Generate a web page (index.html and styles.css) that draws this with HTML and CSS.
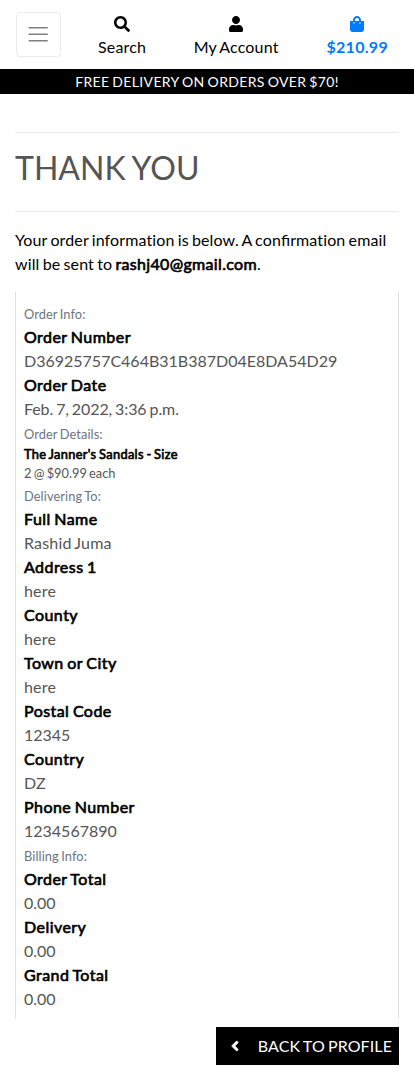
FILE: index.html
```html
<!DOCTYPE html>
<html lang="en">
<head>
<meta charset="utf-8">
<title>Thank You</title>
<link rel="stylesheet" href="styles.css">
</head>
<body>
<header class="header">
  <button class="toggler" aria-label="Menu"><svg width="24.4" height="24.4" viewBox="0 0 30 30"><path d="M4 7h22M4 15h22M4 23h22" stroke="rgba(0,0,0,.5)" stroke-width="2" stroke-linecap="round"/></svg></button>
  <a class="nav-item search"><svg width="16" height="16" viewBox="0 0 512 512"><path d="M505 442.7L405.3 343c-4.500-4.500-10.600-7-17-7H372c27.600-35.300 44-79.700 44-128C416 93.100 322.900 0 208 0S0 93.100 0 208s93.100 208 208 208c48.300 0 92.700-16.400 128-44v16.300c0 6.400 2.500 12.500 7 17l99.700 99.700c9.400 9.400 24.600 9.400 33.900 0l28.300-28.300c9.400-9.400 9.400-24.600.1-34zM208 336c-70.700 0-128-57.200-128-128 0-70.700 57.200-128 128-128 70.700 0 128 57.200 128 128 0 70.700-57.200 128-128 128z"/></svg><span>Search</span></a>
  <a class="nav-item account"><svg width="14" height="16" viewBox="0 0 448 512"><path d="M224 256c70.700 0 128-57.300 128-128S294.700 0 224 0 96 57.300 96 128s57.300 128 128 128zm89.600 32h-16.700c-22.200 10.200-46.900 16-72.900 16s-50.600-5.800-72.900-16h-16.700C60.200 288 0 348.200 0 422.400V464c0 26.500 21.500 48 48 48h352c26.500 0 48-21.500 48-48v-41.600c0-74.200-60.200-134.400-134.400-134.400z"/></svg><span>My Account</span></a>
  <a class="nav-item bag"><svg width="14" height="16" viewBox="0 0 448 512"><path d="M352 160v-32C352 57.420 294.579 0 224 0 153.420 0 96 57.420 96 128v32H0v272c0 44.183 35.817 80 80 80h288c44.183 0 80-35.817 80-80V160h-96zm-192-32c0-35.290 28.710-64 64-64s64 28.710 64 64v32H160v-32zm160 120c-13.255 0-24-10.745-24-24s10.745-24 24-24 24 10.745 24 24-10.745 24-24 24zm-192 0c-13.255 0-24-10.745-24-24s10.745-24 24-24 24 10.745 24 24-10.745 24-24 24z"/></svg><span>$210.99</span></a>
</header>
<div class="banner">FREE DELIVERY ON ORDERS OVER $70!</div>
<main class="content">
  <hr class="rule">
  <h2 class="title">THANK YOU</h2>
  <hr class="rule">
  <p class="intro">Your order information is below. A con<span class="ligature">fi</span>rmation email will be sent to <span class="strong">rashj40@gmail.com</span>.</p>
  <section class="order">
    <div class="section-label"><small>Order Info:</small></div>
    <div class="strong">Order Number</div><div class="code">D36925757C464B31B387D04E8DA54D29</div>
    <div class="strong">Order Date</div><div class="date">Feb. 7, 2022, 3:36 p.m.</div>
    <div class="section-label"><small>Order Details:</small></div>
    <div class="item"><div class="strong">The Janner's Sandals - Size</div><div>2 @ $90.99 each</div></div>
    <div class="section-label"><small>Delivering To:</small></div>
    <div class="strong">Full Name</div><div>Rashid Juma</div>
    <div class="strong">Address 1</div><div>here</div>
    <div class="strong">County</div><div>here</div>
    <div class="strong">Town or City</div><div>here</div>
    <div class="strong">Postal Code</div><div class="code">12345</div>
    <div class="strong">Country</div><div>DZ</div>
    <div class="strong">Phone Number</div><div class="code">1234567890</div>
    <div class="section-label"><small>Billing Info:</small></div>
    <div class="strong">Order Total</div><div class="code">0.00</div>
    <div class="strong">Delivery</div><div class="code">0.00</div>
    <div class="strong">Grand Total</div><div class="code">0.00</div>
  </section>
  <a class="back"><svg width="8" height="16" viewBox="0 0 256 512"><path fill="currentColor" stroke="currentColor" stroke-width="18" d="M31.700 239l136-136c9.400-9.400 24.600-9.400 33.900 0l22.600 22.600c9.400 9.400 9.400 24.600 0 33.900L127.900 256l96.400 96.400c9.400 9.400 9.400 24.600 0 33.900L201.700 409c-9.400 9.400-24.600 9.400-33.900 0l-136-136c-9.500-9.400-9.500-24.600-.1-34z"/></svg><span>BACK TO PROFILE</span></a>
</main>
</body>
</html>
```
FILE: styles.css
```css
* { box-sizing: border-box; }
body { margin: 0; background: #fff; color: #000; font: 16px/24px Lato, sans-serif; letter-spacing: .17px; word-spacing: -1px; }
.header { display: flex; height: 69px; padding: 12px 26px 0 16px; }
.toggler { display: flex; align-items: center; justify-content: center; flex: none; width: 45px; height: 45px; padding: 0 1px 1px 0; background: none; border: 1px solid rgba(0,0,0,.08); border-radius: 4px; }
.nav-item { display: flex; flex-direction: column; align-items: center; flex: none; padding-top: 4px; white-space: nowrap; }
.nav-item svg { display: block; margin-bottom: 3px; }
.search { margin-left: 37px; }
.account { margin-left: 47.500px; }
.bag { margin-left: auto; color: #007bff; fill: #007bff; font-weight: 700; letter-spacing: .3px; }
.banner { height: 25px; background: #000; color: #fff; font-size: 14px; line-height: 25px; text-align: center; letter-spacing: .35px; }
.content { display: flex; flex-direction: column; padding: 38px 15px 8px; }
.rule { width: 100%; height: 1px; margin: 0; border: 0; background: rgba(0,0,0,.08); }
.title { margin: 16px 0 24px; color: #555; font-size: 32px; font-weight: 400; line-height: 38.400px; letter-spacing: 0; }
.intro { margin: 16px 0; letter-spacing: .12px; }
.ligature { letter-spacing: 0; }
.strong { color: #000; -webkit-text-stroke: .65px #000; letter-spacing: .45px; }
.intro .strong { letter-spacing: .34px; }
.order { padding: 8.200px 8px 8px; border: solid #dee2e6; border-width: 0 1px; color: #555; }
.code { letter-spacing: 0; }
.date { letter-spacing: -.1px; }
.section-label { height: 24px; color: #6c757d; letter-spacing: .1px; }
.section-label small { font-size: 12.800px; }
.item { font-size: 12.800px; line-height: 19.200px; letter-spacing: 0; }
.item .strong { letter-spacing: .33px; }
.back { display: flex; align-items: center; align-self: flex-end; width: 183px; height: 38px; margin-top: 8px; padding: 0 7px 0 15px; justify-content: space-between; background: #000; color: #fff; letter-spacing: .1px; white-space: nowrap; }
```
